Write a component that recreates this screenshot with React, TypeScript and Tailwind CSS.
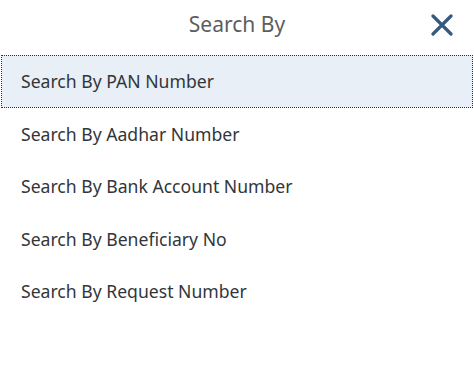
import React, { useState } from 'react';

const options = [
    'Search By PAN Number',
    'Search By Aadhar Number',
    'Search By Bank Account Number',
    'Search By Beneficiary No',
    'Search By Request Number',
];

const App: React.FC = () => {
    const [selected, setSelected] = useState(0);

    return (
        <div className="w-[474px] h-[370px] bg-white" style={{ fontFamily: '"Noto Sans", sans-serif' }}>
            {/* Header */}
            <div className="relative flex h-[55px] items-center justify-center">
                <h2 className="text-[21px] text-[#5b5e61] pb-[5px]">Search By</h2>
                <button className="absolute right-[19px] top-[12px] flex h-[26px] w-[26px] items-center justify-center text-[#36597e]">
                    <svg width="22" height="22" viewBox="0 0 22 22" fill="none" stroke="currentColor" strokeWidth="3.2" strokeLinecap="round">
                        <path d="M2 2 L20 20 M20 2 L2 20" />
                    </svg>
                </button>
            </div>

            {/* Options */}
            <ul className="flex flex-col">
                {options.map((opt, i) => (
                    <li key={opt}>
                        <button
                            onClick={() => setSelected(i)}
                            className={
                                i === selected
                                    ? 'mx-[1px] flex h-[52.5px] w-[472px] items-center border border-dotted border-[#333] bg-[#e8eff7] pl-[19px] text-left text-[17.6px] text-[#32363a]'
                                    : 'flex h-[52.5px] w-full items-center pl-[21px] text-left text-[17.6px] text-[#32363a]'
                            }
                        >
                            {opt}
                        </button>
                    </li>
                ))}
            </ul>
        </div>
    );
};

export default App;
